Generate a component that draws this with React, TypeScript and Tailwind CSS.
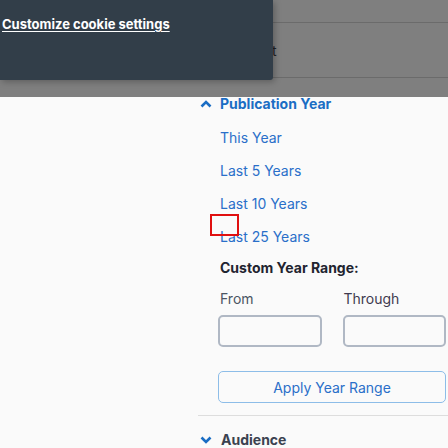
import React from "react";

const yearOptions = ["This Year", "Last 5 Years", "Last 10 Years", "Last 25 Years"];

const Chevron = ({ up, className }: { up?: boolean; className?: string }) => (
  <svg viewBox="0 0 12 8" className={className} fill="none" stroke="currentColor" strokeWidth={2.6}>
    {up ? <path d="M1.5 6.5 6 2l4.5 4.5" /> : <path d="M1.5 1.5 6 6l4.5-4.5" />}
  </svg>
);

export default function App() {
  return (
    <div className="w-[448px] h-[448px] overflow-hidden bg-[#fafafa] font-['Inter',sans-serif]">
      {/* dimmed page + cookie banner */}
      <div className="relative h-[97px] bg-[#7f7f7f]">
        <div className="pt-[22px]">
          <div className="border-t border-[#6b6b6b]" />
          <div className="h-[54px] pl-[272px] flex items-center text-[14px] text-[#222]">t</div>
          <div className="border-t border-[#6b6b6b]" />
        </div>
        <div className="absolute left-0 top-0 w-[273px] h-[80px] bg-[#323e49] rounded-br-[3px] shadow-[2px_2px_6px_rgba(0,0,0,0.25)] pl-[2px] pt-[11px]">
          <a className="text-[13px] font-bold text-white underline underline-offset-2 leading-[18px]">
            Customize cookie settings
          </a>
        </div>
      </div>

      {/* filter panel */}
      <div className="ml-[198px] w-[250px]">
        <div className="h-[14px] flex items-center pl-[2px] text-[#1a6dc4]">
          <Chevron up className="w-[12px] h-[8px]" />
          <span className="ml-[8px] text-[14px] font-bold leading-[14px]">Publication Year</span>
        </div>

        <ul className="mt-[10px]">
          {yearOptions.map((label, i) => (
            <li key={label} className="relative h-[33px] flex items-center pl-[22px] text-[14px] text-[#2a6fc9]">
              {i === 3 && (
                <span className="absolute left-[12px] top-[-6px] w-[29px] h-[22px] border-2 border-[#e01010]" />
              )}
              {label}
            </li>
          ))}
        </ul>

        <div className="h-[28px] flex items-center pl-[22px] text-[14px] font-bold text-[#1f2430]">
          Custom Year Range:
        </div>

        <div className="grid grid-cols-2 gap-x-[21px] pl-[20px] pr-[2px]">
          <div className="h-[34px] flex items-center pl-[2px] text-[14px] text-[#4b5563]">From</div>
          <div className="h-[34px] flex items-center pl-[1px] text-[14px] text-[#3f3a4f]">Through</div>
          <input className="h-[32px] w-full rounded-[5px] border-2 border-[#b0b8c4] bg-[#fafafa]" />
          <input className="h-[32px] w-full rounded-[5px] border-2 border-[#b0b8c4] bg-[#fafafa]" />
        </div>

        <div className="pl-[20px] pr-[2px] mt-[24px]">
          <button className="w-full h-[32px] rounded-[5px] border border-[#8dbde8] text-[14px] text-[#2a6fc9]">
            Apply Year Range
          </button>
        </div>

        <div className="mt-[12px] border-t border-[#dddddd]" />

        <div className="mt-[14px] h-[20px] flex items-center pl-[2px]">
          <Chevron className="w-[12px] h-[8px] text-[#1a6dc4]" />
          <span className="ml-[9px] text-[14px] font-bold leading-[18px] text-[#3b4250]">Audience</span>
        </div>
      </div>
    </div>
  );
}
